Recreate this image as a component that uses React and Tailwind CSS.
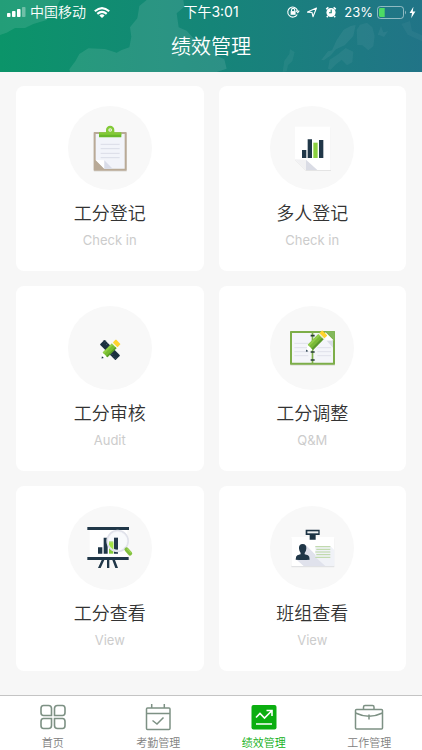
import React from "react";

function HeaderMap() {
  return (
    <svg className="absolute inset-0 h-full w-full" viewBox="0 0 633 216" preserveAspectRatio="none" aria-hidden="true">
      <g fill="#ffffff" fillOpacity="0.1" transform="scale(0.5 1)">
        <path d="M0 0H180L170 22L155 32L140 60L100 72L75 84L45 84L20 98L0 105Z" />
        <path d="M440 0L418 18L412 55L390 82L394 110L388 142L365 150L350 158L315 147L265 145L238 162L226 184L208 208L210 216H650L680 206L673 178L645 165L640 130L610 110L590 125L560 92L536 82L530 40L553 20L550 0Z" />
        <path d="M848 216L853 182L868 162L870 148L884 156L877 184L864 195L860 214Z" fillOpacity="0.05" />
        <path d="M964 180L984 154L996 151L1010 120L1031 89L1052 78L1067 75L1060 108L1034 136L1008 148L991 167L971 181Z" fillOpacity="0.06" />
        <path d="M1070 90L1080 74L1101 68L1117 82L1124 108L1120 139L1105 151L1087 136L1072 135Z" fillOpacity="0.05" />
        <path d="M984 206L989 179L1012 164L1037 144L1060 155L1057 187L1041 196L1025 179L1006 195L992 209Z" fillOpacity="0.05" />
        <path d="M1133 105L1143 78L1150 97L1164 94L1152 111L1140 106Z" fillOpacity="0.05" />
        <path d="M1204 72L1230 63L1236 92L1266 106V124L1223 104Z" fillOpacity="0.04" />
      </g>
    </svg>
  );
}

function StatusBar() {
  return (
    <div className="relative flex h-6 items-center justify-between pl-[7px] pr-[6px] text-[13px] leading-6">
      <div className="flex items-center gap-1">
        <svg width="19" height="10" viewBox="0 0 19 10" fill="white" aria-hidden="true">
          <rect y="6" width="3.5" height="4" rx="0.8" />
          <rect x="5" y="4" width="3.5" height="6" rx="0.8" />
          <rect x="10" y="2" width="3.5" height="8" rx="0.8" />
          <rect x="15" width="3.5" height="10" rx="0.8" fillOpacity="0.35" />
        </svg>
        <span className="text-sm leading-6 font-[350]">中国移动</span>
        <svg className="ml-1" width="16" height="11" viewBox="0 0 16 11" fill="none" stroke="white" strokeWidth="2.1" aria-hidden="true">
          <path d="M.8 4.3Q8-2.1 15.2 4.3M3.3 6.9Q8 2.7 12.7 6.9" />
          <path d="M8 11L5.4 8.4Q8 6.3 10.6 8.4Z" fill="white" stroke="none" />
        </svg>
      </div>
      <span className="absolute left-1/2 -translate-x-1/2 text-sm leading-6">下午3:01</span>
      <div className="flex items-center">
        <svg width="52" height="14" viewBox="0 0 52 14" fill="none" stroke="white" strokeWidth="1.1" aria-hidden="true">
          <path d="M11.2 9.4A5 5 0 1 1 11.6 5.8M10 5.7L11.8 7.6L13.2 5.6" />
          <rect x="4.6" y="6.1" width="5" height="3.7" fill="white" stroke="none" />
          <path d="M5.5 6.2V5A1.6 1.6 0 0 1 8.7 5V6.2" />
          <path d="M21.5 7.1L30.5 3L27 11.7L26 7.5Z" strokeLinejoin="round" />
          <circle cx="45" cy="7.5" r="4.6" fill="white" stroke="none" />
          <path d="M40.2 4.2L42.4 2.4M49.8 4.2L47.6 2.4M41.8 11.1L40.8 12.3M48.2 11.1L49.2 12.3" strokeWidth="1.5" />
          <path d="M45.2 4.5V7.7H43" stroke="#168273" />
        </svg>
        <span className="ml-1.5 text-[13px] leading-6">23%</span>
        <svg className="ml-1" width="39" height="13" viewBox="0 0 39 13" fill="none" aria-hidden="true">
          <rect x="0.5" y="0.5" width="26" height="12" rx="2.8" stroke="white" strokeOpacity="0.5" />
          <path d="M28 4.5Q30 6.5 28 8.5Z" fill="white" fillOpacity="0.5" />
          <path d="M3.4 2H7.7V11H3.4A1.4 1.4 0 0 1 2 9.6V3.4A1.4 1.4 0 0 1 3.4 2Z" fill="#4cdb64" />
          <path d="M36.4 .8L32.6 7H35L34.2 12.2L38.4 5.5H35.8Z" fill="white" />
        </svg>
      </div>
    </div>
  );
}

function ClipboardArt() {
  return (
    <svg className="h-full w-full" viewBox="24 33 252 252" aria-hidden="true">
      <rect x="101" y="113" width="100" height="117" rx="3" fill="#e4e3e1" />
      <rect x="101" y="111" width="99" height="116" rx="2" fill="#b9aa97" />
      <path d="M107 117H194V221H133L107 195Z" fill="#f2f4fa" />
      <path d="M107 195L133 221V196Z" fill="#ffffff" />
      <path d="M133 196L158 221H133Z" fill="#d9dce8" />
      <path d="M122 148H179M122 161H179M122 175H179M122 188H179" stroke="#dadce7" strokeWidth="3" />
      <path d="M117 117H184V125Q184 127 182 127H119Q117 127 117 125Z" fill="#69b82b" />
      <path d="M117 112H138V105A12.500 12.500 0 0 1 163 105V112H184V119H117Z" fill="#83ca38" />
      <circle cx="150.500" cy="105" r="5.500" fill="#eff5ec" />
      <circle cx="150.500" cy="105" r="2" fill="#83ca38" />
    </svg>
  );
}

function ReportArt() {
  return (
    <svg className="h-full w-full" viewBox="24 33 252 252" aria-hidden="true">
      <path d="M99 97H207V228H132L99 195Z" fill="#e4e4e4" />
      <path d="M99 95H206V225H132L99 193Z" fill="#ffffff" />
      <path d="M99 193L132 225V194Z" fill="#f1f1f3" />
      <path d="M132 194L166 225H132Z" fill="#dadce5" />
      <path d="M120 165H133V189H120ZM137 133H150V189H137ZM171 135H184V189H171Z" fill="#203748" />
      <rect x="154" y="143" width="13" height="46" fill="#8bcf40" />
    </svg>
  );
}

function PencilRulerArt() {
  return (
    <svg className="h-full w-full" viewBox="24 24 252 252" aria-hidden="true">
      <g transform="rotate(45 150 156)">
        <rect x="117" y="146" width="66" height="20" rx="2" fill="#1b3040" />
        <path d="M123 147V152M131 147V154M139 147V152M164 165V159M172 165V161M179 165V159" stroke="#506171" strokeWidth="2" />
      </g>
      <g transform="rotate(-45 150 156)">
        <path d="M114 156L129 146V166Z" fill="#ffffff" />
        <rect x="129" y="146" width="39" height="20" fill="#77bd30" />
        <rect x="129" y="146" width="39" height="6" fill="#91cf45" />
        <rect x="129" y="161" width="39" height="5" fill="#5a9d28" />
        <rect x="168" y="146" width="4" height="20" fill="#f1f4dd" />
        <rect x="172" y="146" width="13" height="20" rx="2" fill="#ffd42e" />
        <path d="M114 156L120 152V160Z" fill="#203748" />
      </g>
    </svg>
  );
}

function NotebookArt() {
  return (
    <svg className="h-full w-full" viewBox="24 24 252 252" aria-hidden="true">
      <rect x="85" y="101" width="134" height="102" fill="#dedfda" />
      <rect x="84" y="99" width="135" height="101" rx="2" fill="#7dae49" />
      <path d="M90 105H149V194H90ZM154 105H190L213 128V194H154Z" fill="#f4f5fa" />
      <path d="M190 102L215 127H190Z" fill="#ffffff" />
      <path d="M194 128H213V149Z" fill="#dadce7" />
      <path d="M192 100H218V126Z" fill="#83b95b" />
      <path d="M97 136H139M97 149H139M97 161H139M97 173H139M166 149H207M166 161H207M166 173H207" stroke="#dfe1ea" strokeWidth="3" />
      <path d="M146 113H158M146 162H158M146 186H158" stroke="#263d37" strokeWidth="5" />
      <g transform="rotate(-45 160 133)">
        <path d="M120 133L139 122V144Z" fill="#ffffff" />
        <rect x="139" y="122" width="45" height="22" fill="#79b936" />
        <rect x="139" y="122" width="45" height="7" fill="#91cc4a" />
        <rect x="139" y="138" width="45" height="6" fill="#5b992d" />
        <rect x="184" y="122" width="4" height="22" fill="#e7edc8" />
        <rect x="188" y="122" width="12" height="22" rx="2" fill="#ffd42e" />
        <path d="M120 133L126 129V137Z" fill="#203748" />
      </g>
    </svg>
  );
}

function PresentationArt() {
  return (
    <svg className="h-full w-full" viewBox="24 27 252 252" aria-hidden="true">
      <path d="M89 98H202V182H89Z" fill="#ffffff" />
      <path d="M82 90H207V99H82ZM82 180H206V189H82ZM125 189H133L122 213H114ZM141 189H148V213H141ZM157 189H165L174 213H166Z" fill="#203748" />
      <path d="M114 151H127V170H114ZM131 122H143V170H131ZM162 122H174V170H162Z" fill="#203748" />
      <rect x="147" y="132" width="13" height="38" fill="#84cb39" />
      <circle cx="173" cy="132" r="31" fill="#f2f5fa" fillOpacity="0.55" stroke="#e0e2ea" strokeWidth="6" />
      <circle cx="173" cy="132" r="28" fill="none" stroke="#fafbfe" strokeWidth="2" />
      <path d="M147 136H160V158Q151 151 147 143Z" fill="#a3e344" />
      <path d="M162 122H174V157Q167 158 162 155Z" fill="#24384b" />
      <path d="M193 152L201 160" stroke="#d6dce3" strokeWidth="5" />
      <path d="M200 158L210 169" stroke="#80bf3c" strokeWidth="13" strokeLinecap="round" />
      <path d="M202 156L213 167" stroke="#9ad454" strokeWidth="4" strokeLinecap="round" />
    </svg>
  );
}

function BadgeArt() {
  return (
    <svg className="h-full w-full" viewBox="24 27 252 252" aria-hidden="true">
      <rect x="88" y="123" width="129" height="88" rx="2" fill="#e1e2e4" />
      <rect x="88" y="120" width="129" height="87" rx="2" fill="#ffffff" />
      <path d="M132 145L194 207H125L102 187Z" fill="#e0e2ec" />
      <path d="M160 147L205 147L217 159V207H190L160 180Z" fill="#f0f2f7" />
      <path d="M122 141C114 141 110 146 111 155Q112 164 116 168V172L106 175Q101 178 101 188Q122 190 143 188Q143 178 138 175L128 172V168Q132 164 133 155C134 146 130 141 122 141Z" fill="#203748" />
      <path d="M160 149H205M163 157H205M160 165H205M163 173H205M160 181H205" stroke="#b8d6a1" strokeWidth="3" />
      <path d="M131 98H173V114H161V128H143V114H131Z" fill="#1c3344" />
      <rect x="136" y="103" width="33" height="6" fill="#edf0f2" />
    </svg>
  );
}

function HomeIcon() {
  return (
    <svg width="30" height="28" viewBox="0 0 30 28" fill="none" stroke="#7d9184" strokeWidth="1.6" aria-hidden="true">
      <path d="M5.500 2.500H10.500Q13.500 2.500 13.500 5.500V12.500H5.500Q3 12.500 3 9.500V5.500Q3 2.500 5.500 2.500ZM19.500 2.500H24.500Q27 2.500 27 5.500V9.500Q27 12.500 24.500 12.500H16.500V5.500Q16.500 2.500 19.500 2.500ZM5.500 15.500H13.500V22.500Q13.500 25.500 10.500 25.500H5.500Q3 25.500 3 22.500V18.500Q3 15.500 5.500 15.500ZM16.500 15.500H24.500Q27 15.500 27 18.500V22.500Q27 25.500 24.500 25.500H19.500Q16.500 25.500 16.500 22.500Z" />
    </svg>
  );
}

function CalendarIcon() {
  return (
    <svg width="30" height="28" viewBox="0 0 30 28" fill="none" stroke="#7d9184" strokeWidth="1.5" aria-hidden="true">
      <rect x="3.500" y="5" width="23.500" height="21.500" rx="1" />
      <path d="M3.500 10.500H27M8.700 1V5M21.300 1V5M9.500 17.500L14 21L20.500 14.500" />
    </svg>
  );
}

function TrendIcon() {
  return (
    <svg width="30" height="28" viewBox="0 0 30 28" fill="none" stroke="white" strokeWidth="1.6" aria-hidden="true">
      <rect x="2.500" y="2" width="25" height="24.500" rx="2" fill="#0bae10" stroke="none" />
      <path d="M7 14.500L11 10.500L15.500 15L22.500 8M17.500 7.500H23V13M7 21H23" />
    </svg>
  );
}

function BriefcaseIcon() {
  return (
    <svg width="30" height="28" viewBox="0 0 30 28" fill="none" stroke="#7d9184" strokeWidth="1.5" aria-hidden="true">
      <rect x="1.500" y="6.500" width="27" height="19.500" rx="1" />
      <path d="M9.500 6.500V4Q9.500 2.500 11 2.500H18.500Q20 2.500 20 4V6.500M1.500 10Q15 16.500 28.500 10M15 11.500V16.500" />
    </svg>
  );
}

const cards = [
  { title: "工分登记", caption: "Check in", Art: ClipboardArt },
  { title: "多人登记", caption: "Check in", Art: ReportArt },
  { title: "工分审核", caption: "Audit", Art: PencilRulerArt },
  { title: "工分调整", caption: "Q&M", Art: NotebookArt },
  { title: "工分查看", caption: "View", Art: PresentationArt },
  { title: "班组查看", caption: "View", Art: BadgeArt },
];

const tabs = [
  { label: "首页", Icon: HomeIcon },
  { label: "考勤管理", Icon: CalendarIcon },
  { label: "绩效管理", Icon: TrendIcon, active: true },
  { label: "工作管理", Icon: BriefcaseIcon },
];

export default function App() {
  return (
    <div className="flex min-h-screen flex-col bg-[#f7f7f7] font-[Inter,'Noto_Sans_CJK_SC',sans-serif]">
      <header className="relative h-[72px] overflow-hidden bg-linear-to-r from-[#0b9469] via-[#158578] to-[#217487] text-white">
        <HeaderMap />
        <StatusBar />
        <h1 className="relative text-center text-xl leading-[46px] font-[350]">绩效管理</h1>
      </header>

      <main className="grid flex-1 grid-cols-2 content-start gap-[15px] px-4 pt-[14px] pb-6">
        {cards.map(({ title, caption, Art }) => (
          <button key={title} type="button" className="flex h-[185px] flex-col items-center rounded-lg bg-white pt-5">
            <span className="block size-[84px] overflow-hidden rounded-full bg-[#f8f8f8]">
              <Art />
            </span>
            <span className="mt-2.5 text-lg leading-7 font-[350] text-[#333333]">{title}</span>
            <span className="text-[13px] leading-6 text-[#cccccc]">{caption}</span>
          </button>
        ))}
      </main>

      <nav className="grid h-14 grid-cols-4 border-t border-[#c4c4c4] bg-white">
        {tabs.map(({ label, Icon, active }) => (
          <a
            key={label}
            href="#"
            aria-current={active ? "page" : undefined}
            className={`flex flex-col items-center pt-[7px] text-[11px] leading-6 font-[350] ${active ? "text-[#0bae10]" : "text-[#808080]"}`}
          >
            <Icon />
            {label}
          </a>
        ))}
      </nav>
    </div>
  );
}
